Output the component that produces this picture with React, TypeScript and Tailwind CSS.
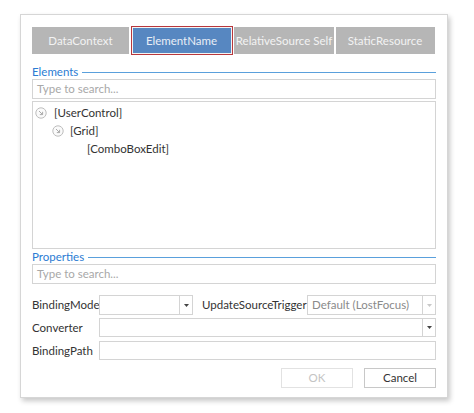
import React from "react";

const font = { fontFamily: 'Lato, "Noto Sans", Arial, sans-serif' };

const Caret = ({ light }: { light?: boolean }) => (
  <svg width="5" height="3" viewBox="0 0 5 3">
    <path d="M0 0 L5 0 L2.5 3 Z" fill={light ? "#c8c8c8" : "#444"} />
  </svg>
);

const TreeIcon = () => (
  <svg width="12" height="12" viewBox="0 0 12 12" className="shrink-0">
    <circle cx="6" cy="6" r="5.2" fill="#fafafa" stroke="#bdbdbd" strokeWidth="1" />
    <path d="M4 4 L7.6 7.6 M7.6 4.8 L7.6 7.6 L4.8 7.6" fill="none" stroke="#ababab" strokeWidth="1" />
  </svg>
);

const GroupLabel = ({ title }: { title: string }) => (
  <div className="flex items-center h-[14px] gap-[4px]">
    <span className="text-[11.5px] leading-none text-[#2b7cd3]">{title}</span>
    <div className="flex-1 h-px bg-[#5aa0dc]" />
  </div>
);

const Search = () => (
  <div className="h-[20px] border border-[#d4d4d4] flex items-center px-[4px] text-[11.5px] text-[#a8a8a8]">
    Type to search...
  </div>
);

const Combo = ({ className, text, disabled }: { className: string; text?: string; disabled?: boolean }) => (
  <div className={`border border-[#d4d4d4] flex items-stretch ${className}`}>
    <div className={`flex-1 flex items-center px-[4px] text-[11.5px] ${disabled ? "text-[#8a8a8a]" : "text-[#333]"}`}>
      {text}
    </div>
    <div className="w-[13px] border-l border-[#d4d4d4] flex items-center justify-center">
      <Caret light={disabled} />
    </div>
  </div>
);

export default function App() {
  const tabs = [
    { name: "DataContext", w: "w-[97px]" },
    { name: "ElementName", w: "w-[102px]", active: true },
    { name: "RelativeSource Self", w: "w-[100px]" },
    { name: "StaticResource", w: "w-[99px]" },
  ];

  return (
    <div className="w-[474px] h-[413px] bg-white pt-[14px] pl-[20px]" style={font}>
      <div className="w-[428px] h-[384px] bg-white border border-[#d6d6d6] shadow-[2px_3px_5px_rgba(0,0,0,0.22)] px-[11px] pt-[11px] flex flex-col text-[#333]">
        <div className="h-[29px] flex items-center gap-[1.5px]">
          {tabs.map((t) =>
            t.active ? (
              <div
                key={t.name}
                className={`${t.w} h-[29px] border border-[#b8373c] p-px bg-[#f4f4f4]`}
              >
                <div className="w-full h-full bg-[#5787c1] flex items-center justify-center text-[11.5px] text-[#e9eef6]">
                  {t.name}
                </div>
              </div>
            ) : (
              <div
                key={t.name}
                className={`${t.w} h-[27px] bg-[#b6b6b6] flex items-center justify-center text-[11.5px] text-[#f3f3f3] whitespace-nowrap overflow-hidden`}
              >
                {t.name}
              </div>
            )
          )}
        </div>

        <div className="mt-[10px]">
          <GroupLabel title="Elements" />
        </div>
        <Search />
        <div className="mt-[2px] h-[148px] border border-[#d4d4d4] pt-[2px] text-[11.5px]">
          <div className="h-[18px] flex items-center pl-[2px] gap-[7px]">
            <TreeIcon />
            <span>[UserControl]</span>
          </div>
          <div className="h-[18px] flex items-center pl-[19px] gap-[6px]">
            <TreeIcon />
            <span>[Grid]</span>
          </div>
          <div className="h-[18px] flex items-center pl-[54px]">
            <span>[ComboBoxEdit]</span>
          </div>
        </div>

        <div className="mt-[1px]">
          <GroupLabel title="Properties" />
        </div>
        <Search />

        <div className="mt-[11px] h-[20px] flex items-center text-[11.5px]">
          <span className="w-[67px]">BindingMode</span>
          <Combo className="w-[94px] h-[20px]" />
          <span className="ml-[9px] w-[105px] whitespace-nowrap">UpdateSourceTrigger</span>
          <Combo className="flex-1 h-[20px]" text="Default (LostFocus)" disabled />
        </div>
        <div className="mt-[3px] h-[19px] flex items-center text-[11.5px]">
          <span className="w-[67px]">Converter</span>
          <Combo className="flex-1 h-[19px]" />
        </div>
        <div className="mt-[4px] h-[19px] flex items-center text-[11.5px]">
          <span className="w-[67px]">BindingPath</span>
          <div className="flex-1 h-[19px] border border-[#d4d4d4]" />
        </div>

        <div className="mt-[8px] flex justify-end gap-[11px] text-[11.5px]">
          <div className="w-[72px] h-[20px] border border-[#e2e2e2] flex items-center justify-center text-[#c4c4c4]">
            OK
          </div>
          <div className="w-[72px] h-[20px] border border-[#c8c8c8] flex items-center justify-center text-[#333]">
            Cancel
          </div>
        </div>
      </div>
    </div>
  );
}
